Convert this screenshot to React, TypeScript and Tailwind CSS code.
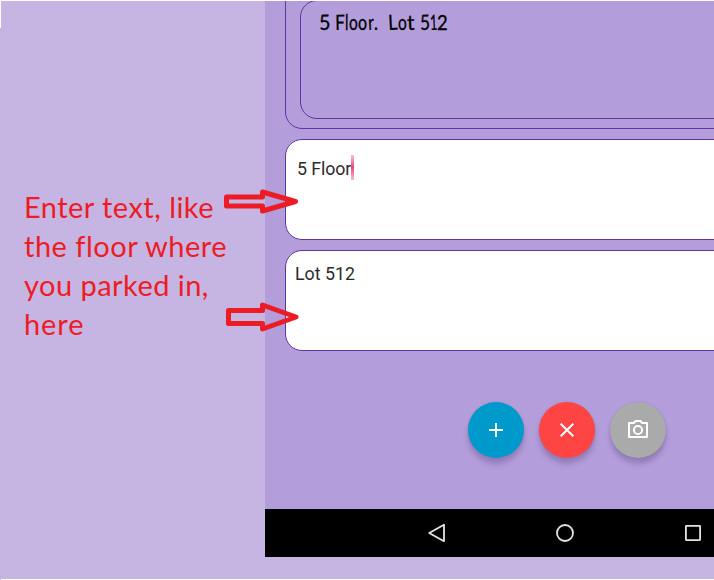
import React from "react";

const handwritten: { text: string; className: string; glyph: string }[] = [
  { text: "5", className: "w-[16px]", glyph: "scale-x-[0.94] -rotate-2" },
  { text: "F", className: "w-[10px]", glyph: "scale-x-[0.82] -rotate-1" },
  { text: "l", className: "w-[4px]", glyph: "scale-x-[0.7]" },
  { text: "o", className: "w-[9px]", glyph: "scale-x-[0.74]" },
  { text: "o", className: "w-[10px]", glyph: "scale-x-[0.76]" },
  { text: "r", className: "w-[6px]", glyph: "scale-x-[0.74] -rotate-3" },
  { text: ".", className: "w-[14px]", glyph: "scale-x-[0.8]" },
  { text: "L", className: "w-[10px]", glyph: "scale-x-[0.86] -rotate-3" },
  { text: "o", className: "w-[9px]", glyph: "scale-x-[0.74]" },
  { text: "t", className: "w-[13px]", glyph: "scale-x-[1] -rotate-2" },
  { text: "5", className: "w-[10px]", glyph: "scale-x-[0.82] -rotate-2" },
  { text: "1", className: "w-[7px]", glyph: "scale-x-[0.6] -rotate-2" },
  { text: "2", className: "w-[11px]", glyph: "scale-x-[0.88]" },
];

function Arrow({ points, className }: { points: string; className: string }) {
  return (
    <svg className={`absolute h-[40px] w-[90px] ${className}`} viewBox="0 0 90 40" fill="none">
      <polygon points={points} stroke="#ed1c24" strokeWidth="5" strokeLinejoin="round" />
    </svg>
  );
}

function Fab({ className, children }: { className: string; children: React.ReactNode }) {
  return (
    <div
      className={`flex size-14 items-center justify-center rounded-full shadow-[0_6px_5px_rgba(70,50,100,0.28),0_0_2px_rgba(70,50,100,0.18)] ${className}`}
    >
      {children}
    </div>
  );
}

export default function App() {
  return (
    <div className="relative flex h-[580px] w-[714px] overflow-hidden bg-white pt-px pb-px">
      <div className="absolute left-0 top-[28px] h-[552px] w-px bg-[#c6b5e2]" />
      <div className="ml-px flex min-w-0 flex-1 bg-[#c6b5e2]">
        <aside className="w-[264px] shrink-0 pl-[23px] pt-[186px] font-['Lato',sans-serif] text-[29px] leading-[39px] text-[#ed1c24]">
          <p className="w-max whitespace-nowrap tracking-[0.46px]">Enter text, like</p>
          <p className="w-max whitespace-nowrap tracking-[0.5px]">the floor where</p>
          <p className="w-max whitespace-nowrap tracking-[0.46px]">you parked in,</p>
          <p className="w-max whitespace-nowrap tracking-[0.9px]">here</p>
        </aside>

        <main className="flex h-[556px] min-w-0 flex-1 flex-col overflow-hidden bg-[#b39ddb] font-['Roboto',sans-serif]">
          <section className="-mt-[20px] ml-[20px] h-[148px] w-[460px] shrink-0 rounded-[17px] border border-[#5e35a6] pl-[14px] pt-[18px]">
            <div className="h-[119px] rounded-[17px] border border-[#5e35a6] pl-[18px] pt-[8px]">
              <div className="flex h-6 font-['Lato',sans-serif] text-[21px] leading-[25px] text-black [-webkit-text-stroke:0.3px_black]">
                {handwritten.map((letter, i) => (
                  <span key={i} className={`shrink-0 ${letter.className}`}>
                    <span className={`inline-block origin-left ${letter.glyph}`}>{letter.text}</span>
                  </span>
                ))}
              </div>
            </div>
          </section>

          <section className="ml-[20px] mt-[10px] flex h-[101px] w-[460px] shrink-0 rounded-[17px] border border-[#5e35a6] bg-white pl-[11px] pt-[15px] text-[17.8px] leading-[28px] text-[#2b2b2b]">
            <span className="w-[54px] whitespace-nowrap tracking-[-0.1px]">5 Floor</span>
            <span className="h-[25px] w-[3px] bg-linear-to-b from-[#f8bdd1] via-[#ec407a] to-[#f8bdd1]" />
          </section>

          <section className="ml-[20px] mt-[10px] h-[101px] w-[460px] shrink-0 rounded-[17px] border border-[#5e35a6] bg-white pl-[9px] pt-[9px] text-[17.8px] leading-[28px] text-[#2b2b2b]">
            Lot 512
          </section>

          <div className="ml-[203px] mt-[51px] flex shrink-0 gap-[15px]">
            <Fab className="bg-[#0099cc]">
              <svg className="size-6" viewBox="0 0 24 24" fill="none" stroke="white" strokeWidth="2">
                <path d="M12 5v14M5 12h14" />
              </svg>
            </Fab>
            <Fab className="bg-[#ff4444]">
              <svg className="size-6" viewBox="0 0 24 24" fill="none" stroke="white" strokeWidth="2">
                <path d="M5.7 5.7l12.6 12.6M18.3 5.7L5.7 18.3" />
              </svg>
            </Fab>
            <Fab className="bg-[#aaaaaa]">
              <svg className="size-6" viewBox="0 0 24 24" fill="none" stroke="white" strokeWidth="2">
                <path d="M3 5h4.8l1.8-2h4.8l1.8 2H21v14H3z" strokeLinejoin="round" />
                <circle cx="12" cy="12" r="4.1" />
              </svg>
            </Fab>
          </div>

          <nav className="mt-auto flex h-12 w-[480px] shrink-0 items-center bg-black pl-[160px]">
            <svg className="h-6 w-6" viewBox="0 0 24 24" fill="none" stroke="#e4e4e4" strokeWidth="1.8">
              <path d="M19 3.8v16.4L4.2 12z" strokeLinejoin="round" />
            </svg>
            <svg className="ml-[104px] h-6 w-6" viewBox="0 0 24 24" fill="none" stroke="#e4e4e4" strokeWidth="1.8">
              <circle cx="12" cy="12" r="8" />
            </svg>
            <svg className="ml-[104px] h-6 w-6" viewBox="0 0 24 24" fill="none" stroke="#e4e4e4" strokeWidth="1.8">
              <rect x="4.9" y="4.9" width="14.2" height="14.2" rx="0.5" />
            </svg>
          </nav>
        </main>
      </div>
      <Arrow className="left-[215px] top-[180px]" points="11.5,17 47.5,17 47.5,12 80.5,21.5 47.5,31 47.5,26 11.5,26" />
      <Arrow className="left-[215px] top-[297px]" points="13.5,13.5 47.5,13.5 47.5,8 81,20 47.5,32 47.5,26.5 13.5,26.5" />
    </div>
  );
}
